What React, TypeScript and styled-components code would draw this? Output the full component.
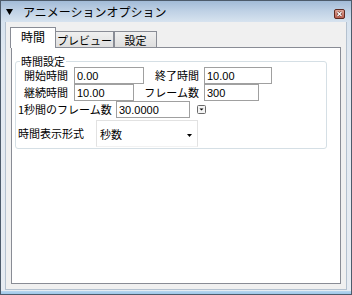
import React from 'react';
import styled, { createGlobalStyle } from 'styled-components';

const GlobalStyle = createGlobalStyle`
  html, body { margin: 0; padding: 0; }
  body { width: 352px; height: 295px; overflow: hidden; background: #ffffff; }
  #root { width: 352px; height: 295px; }
`;

const JP = `"Noto Sans CJK JP", "Noto Sans", sans-serif`;
const LATIN = `"Liberation Sans", Arial, sans-serif`;

const Window = styled.div`
  box-sizing: border-box;
  width: 352px;
  height: 295px;
  border: 1px solid #4d5b6b;
  padding: 0 4px 4px 4px;
  display: flex;
  flex-direction: column;
  background:
    linear-gradient(to top, #9ec7e9 0, #b9d7ef 3px, transparent 3px),
    linear-gradient(to bottom, #a2bbd7 0px, #bfd1e5 10px, #d7e3ef 21px, #e2e9f1 60px, #e7ecf2 100%);
`;

const TitleBar = styled.div`
  height: 21px;
  display: flex;
  align-items: center;
  flex: none;
`;

const TitleArrow = styled.svg`
  width: 7px;
  height: 6px;
  margin-left: 1px;
  margin-top: 1px;
  flex: none;
`;

const TitleText = styled.span`
  margin-left: 10px;
  font-family: ${JP};
  font-size: 12px;
  line-height: 14px;
  color: #000;
  margin-top: 1px;
`;

const CloseBtn = styled.svg`
  width: 11px;
  height: 10px;
  margin-left: auto;
  margin-right: 2px;
  margin-top: 4px;
  flex: none;
`;

const Client = styled.div`
  flex: 1;
  display: flex;
  flex-direction: column;
  background: #f0f0f0;
  border: 1px solid #b4c1cf;
  border-top: none;
  padding: 5px 5px 5px 5px;
  min-height: 0;
`;

const TabsRow = styled.div`
  display: flex;
  align-items: flex-end;
  height: 20px;
  margin-left: -1px;
  flex: none;
`;

const Tab = styled.div<{ $active?: boolean; $w: number; $ml?: number }>`
  box-sizing: border-box;
  width: ${p => p.$w}px;
  margin-left: ${p => p.$ml ?? 0}px;
  height: ${p => (p.$active ? 21 : 16)}px;
  margin-bottom: ${p => (p.$active ? -1 : 0)}px;
  position: relative;
  z-index: ${p => (p.$active ? 2 : 1)};
  border: 1px solid #898c95;
  border-bottom: none;
  background: ${p => (p.$active ? '#ffffff' : 'linear-gradient(to bottom, #f0f0f0, #dedede)')};
  font-family: ${JP};
  font-size: ${p => (p.$active ? 12 : 11)}px;
  line-height: 12px;
  color: #000;
  display: flex;
  justify-content: center;
  padding-top: ${p => (p.$active ? 3 : 2)}px;
`;

const Panel = styled.div`
  flex: 1;
  background: #ffffff;
  border: 1px solid #898c95;
  padding: 7px 13px 0 3px;
  min-height: 0;
`;

const GroupBox = styled.fieldset`
  margin: 0;
  padding: 0 0 1px 0;
  border: 1px solid #d5dfe5;
  border-radius: 3px;
  min-width: 0;
`;

const Legend = styled.legend`
  font-family: ${JP};
  font-size: 11px;
  line-height: 12px;
  padding: 0 1px;
  margin-left: 4px;
  color: #000;
`;

const PairRow = styled.div`
  display: grid;
  grid-template-columns: 58px 130px 1fr;
  align-items: center;
  height: 17px;
`;

const Label = styled.span<{ $align?: 'left' | 'right'; $pad?: number }>`
  font-family: ${JP};
  font-size: 11px;
  line-height: 13px;
  color: #000;
  white-space: nowrap;
  text-align: ${p => p.$align ?? 'left'};
  ${p => (p.$align === 'right' ? `padding-right: ${p.$pad ?? 0}px;` : `padding-left: ${p.$pad ?? 0}px;`)}
`;

const MidCell = styled.div`
  display: flex;
  align-items: center;
  justify-content: space-between;
`;

const Field = styled.input<{ $w: number }>`
  box-sizing: border-box;
  width: ${p => p.$w}px;
  height: 17px;
  margin: 0;
  border: 1px solid #a0a0a0;
  border-radius: 0;
  padding: 0 2px;
  background: #fff;
  font-family: ${LATIN};
  font-size: 11px;
  color: #000;
  outline: none;
`;

const FlexRow = styled.div<{ $h: number; $mt?: number }>`
  display: flex;
  align-items: center;
  height: ${p => p.$h}px;
  margin-top: ${p => p.$mt ?? 0}px;
`;

const FixedLabel = styled(Label)<{ $w: number }>`
  width: ${p => p.$w}px;
  flex: none;
  box-sizing: border-box;
`;

const SpinBtn = styled.svg`
  width: 9px;
  height: 9px;
  margin-left: 7px;
  flex: none;
`;

const Combo = styled.div`
  box-sizing: border-box;
  width: 102px;
  height: 27px;
  border: 1px solid #e2e2e2;
  border-bottom-color: #f2f2f2;
  display: flex;
  align-items: center;
  padding: 0 5px 0 3px;
  font-family: ${JP};
  font-size: 11px;
  color: #000;
`;

const ComboArrow = styled.svg`
  width: 5px;
  height: 3px;
  margin-left: auto;
  margin-top: 3px;
`;

export default function App() {
  return (
    <>
      <GlobalStyle />
      <Window>
        <TitleBar>
          <TitleArrow viewBox="0 0 7 6">
            <polygon points="0,0 7,0 3.5,6" fill="#000" />
          </TitleArrow>
          <TitleText>アニメーションオプション</TitleText>
          <CloseBtn viewBox="0 0 11 10">
            <defs>
              <linearGradient id="cg" x1="0" y1="0" x2="0" y2="1">
                <stop offset="0" stopColor="#e2a99c" />
                <stop offset="1" stopColor="#b85a4b" />
              </linearGradient>
            </defs>
            <rect x="0.5" y="0.5" width="10" height="9" rx="1.5" fill="url(#cg)" stroke="#5e2b22" />
            <path d="M3.5 3 L7.5 7 M7.5 3 L3.5 7" stroke="#5e2b22" strokeWidth="2.4" />
            <path d="M3.5 3 L7.5 7 M7.5 3 L3.5 7" stroke="#ffffff" strokeWidth="1.3" />
          </CloseBtn>
        </TitleBar>
        <Client>
          <TabsRow>
            <Tab $active $w={46}>時間</Tab>
            <Tab $w={59} $ml={-1}>プレビュー</Tab>
            <Tab $w={43}>設定</Tab>
          </TabsRow>
          <Panel>
            <GroupBox>
              <Legend>時間設定</Legend>
              <PairRow>
                <Label $align="right" $pad={6}>開始時間</Label>
                <MidCell>
                  <Field $w={70} readOnly value="0.00" />
                  <Label $align="right" $pad={5}>終了時間</Label>
                </MidCell>
                <Field $w={68} readOnly value="10.00" />
              </PairRow>
              <PairRow>
                <Label $align="right" $pad={6}>継続時間</Label>
                <MidCell>
                  <Field $w={60} readOnly value="10.00" />
                  <Label $align="right" $pad={5}>フレーム数</Label>
                </MidCell>
                <Field $w={55} readOnly value="300" />
              </PairRow>
              <FlexRow $h={17}>
                <FixedLabel $w={100} $pad={2}>1秒間のフレーム数</FixedLabel>
                <Field $w={74} readOnly value="30.0000" />
                <SpinBtn viewBox="0 0 9 9">
                  <rect x="0.5" y="0.5" width="8" height="8" rx="1" fill="#f4f4f4" stroke="#6a6a6a" />
                  <polygon points="2.5,3.5 6.5,3.5 4.5,5.5" fill="#000" />
                </SpinBtn>
              </FlexRow>
              <FlexRow $h={27} $mt={2}>
                <FixedLabel $w={80} $pad={2}>時間表示形式</FixedLabel>
                <Combo>
                  <span>秒数</span>
                  <ComboArrow viewBox="0 0 5 3">
                    <polygon points="0,0 5,0 2.5,3" fill="#000" />
                  </ComboArrow>
                </Combo>
              </FlexRow>
            </GroupBox>
          </Panel>
        </Client>
      </Window>
    </>
  );
}
